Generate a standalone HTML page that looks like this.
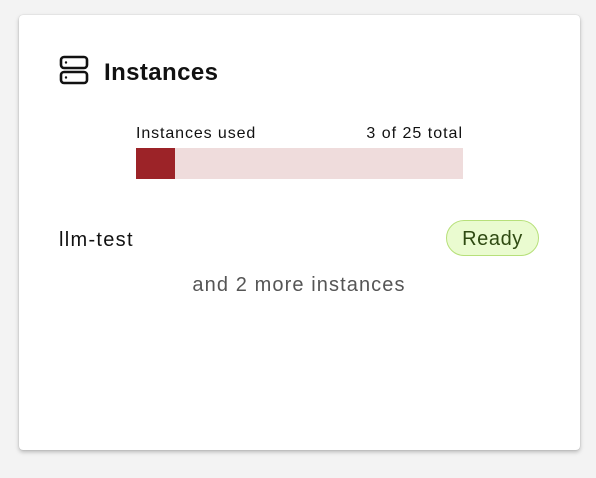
<!DOCTYPE html>
<html><head><style>
body{margin:0;width:596px;height:478px;background:#f3f3f3;font-family:"Liberation Sans",sans-serif;position:relative;overflow:hidden}
.card{position:absolute;left:19px;top:15px;width:561px;height:435px;background:#fff;border-radius:4px;box-shadow:0 2px 4px rgba(0,0,0,.25),0 0 1px rgba(0,0,0,.2)}
.t{position:absolute;white-space:nowrap}
</style></head><body>
<div class="card"></div>
<svg style="position:absolute;left:59px;top:55px" width="30" height="30" viewBox="0 0 30 30" fill="none" stroke="#111" stroke-width="2.6">
<rect x="2" y="2" width="26" height="11" rx="3"/><rect x="2" y="17" width="26" height="11" rx="3"/>
<circle cx="7" cy="7.5" r="1.2" fill="#111" stroke="none"/><circle cx="7" cy="22.5" r="1.2" fill="#111" stroke="none"/>
</svg>
<div class="t" style="left:104px;top:59px;font-size:24px;font-weight:bold;color:#111;letter-spacing:0.4px">Instances</div>
<div class="t" style="left:136px;top:125px;font-size:16px;color:#111;letter-spacing:0.9px">Instances used</div>
<div class="t" style="right:133px;top:125px;font-size:16px;color:#111;letter-spacing:1px">3 of 25 total</div>
<div style="position:absolute;left:136px;top:148px;width:327px;height:31px;background:#efdcdc"></div>
<div style="position:absolute;left:136px;top:148px;width:39px;height:31px;background:#9c2328"></div>
<div class="t" style="left:59px;top:229px;font-size:20px;color:#111;letter-spacing:1.3px">llm-test</div>
<div style="position:absolute;left:446px;top:220px;width:93px;height:36px;box-sizing:border-box;border:1px solid #b7e07a;border-radius:18px;background:#eafbd0;color:#2f4a12;font-size:20px;text-align:center;line-height:36px;letter-spacing:0.6px">Ready</div>
<div class="t" style="left:0;width:598px;text-align:center;top:274px;font-size:20px;color:#555;letter-spacing:1.1px">and 2 more instances</div>
</body></html>
